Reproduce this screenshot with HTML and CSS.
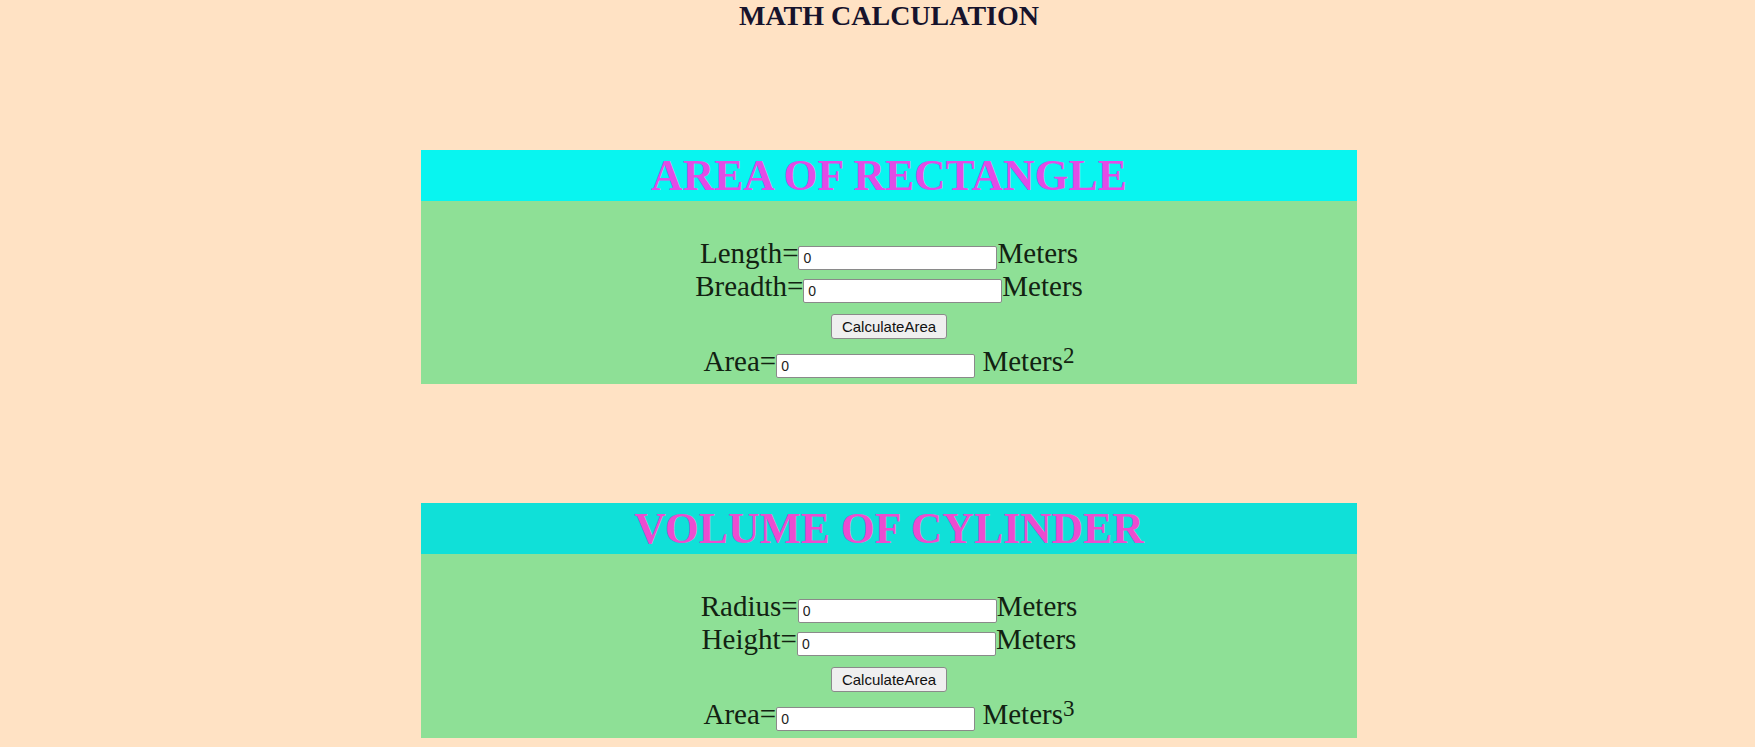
FILE: index.html
```html
<!DOCTYPE html>
<html lang="en">
<head>
<meta charset="utf-8">
<title>Math Calculation</title>
<link rel="stylesheet" href="styles.css">
</head>
<body>
<h2 class="title">MATH CALCULATION</h2>

<section class="card card-rect">
  <h1 class="card-head">AREA OF RECTANGLE</h1>
  <div class="card-body">
    <div class="row">Length=<input class="field" type="text" value="0">Meters</div>
    <div class="row">Breadth=<input class="field" type="text" value="0">Meters</div>
    <div class="row row-btn"><button class="calc" type="button">CalculateArea</button></div>
    <div class="row row-result">Area=<input class="field" type="text" value="0"> Meters<sup class="unit-exp">2</sup></div>
  </div>
</section>

<section class="card card-cyl">
  <h1 class="card-head">VOLUME OF CYLINDER</h1>
  <div class="card-body">
    <div class="row">Radius=<input class="field" type="text" value="0">Meters</div>
    <div class="row">Height=<input class="field" type="text" value="0">Meters</div>
    <div class="row row-btn"><button class="calc" type="button">CalculateArea</button></div>
    <div class="row row-result">Area=<input class="field" type="text" value="0"> Meters<sup class="unit-exp">3</sup></div>
  </div>
</section>
</body>
</html>
```

FILE: styles.css
```css
html {
  background: #ffe2c4;
}

body {
  margin: 0;
  padding: 0 0 0 23px;
  background: #ffe2c4;
  font-family: "Liberation Serif", "Times New Roman", serif;
  color: #111;
}

.title {
  margin: 0;
  font-size: 28px;
  line-height: 32px;
  font-weight: bold;
  text-align: center;
  color: #16132c;
}

.card {
  width: 936px;
  margin: 118px auto 0;
}

.card-cyl {
  margin-top: 119px;
}

.card-head {
  margin: 0;
  height: 51px;
  line-height: 51px;
  font-size: 43.7px;
  font-weight: bold;
  text-align: center;
}

.card-rect .card-head {
  background: #08f5f0;
  color: #e24ce6;
}

.card-cyl .card-head {
  background: #10e0d8;
  color: #ec4cd0;
}

.card-body {
  background: #8ee096;
  padding: 36px 0 6px;
  font-size: 29px;
  color: #122212;
}

.card-cyl .card-body {
  padding-bottom: 7px;
}

.row {
  line-height: 33px;
  text-align: center;
  white-space: nowrap;
}

.row-btn {
  margin-top: 3px;
}

.row-result {
  margin-top: 6px;
}

.field {
  box-sizing: border-box;
  width: 199px;
  height: 24px;
  margin: 0;
  padding: 2px 4px;
  border: 1px solid #8a8a8a;
  border-radius: 2px;
  background: #fff;
  font-family: "Liberation Sans", Arial, sans-serif;
  font-size: 14px;
  color: #222;
  vertical-align: baseline;
}

.calc {
  box-sizing: border-box;
  height: 25px;
  width: 116px;
  margin: 0;
  padding: 0 6px;
  border: 1px solid #8a8a8a;
  border-radius: 3px;
  background: #efefef;
  font-family: "Liberation Sans", Arial, sans-serif;
  font-size: 15px;
  color: #111;
}

.unit-exp {
  font-size: 23px;
  line-height: 0;
  vertical-align: 8px;
}
```
